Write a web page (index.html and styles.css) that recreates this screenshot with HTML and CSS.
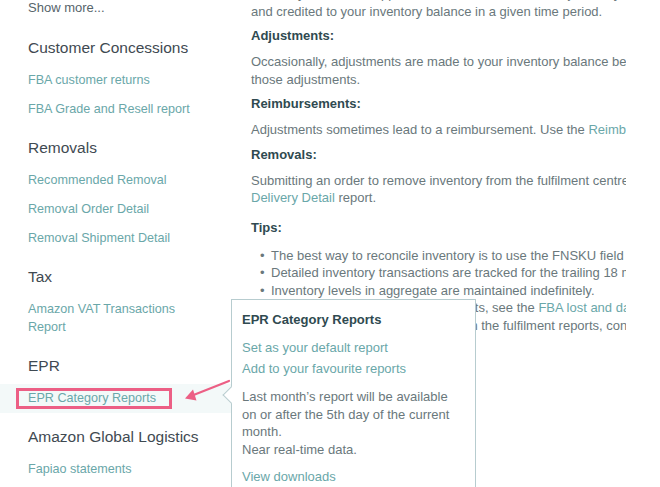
FILE: index.html
```html
<!DOCTYPE html>
<html lang="en">
<head>
  <meta charset="UTF-8" />
  <meta name="viewport" content="width=device-width, initial-scale=1.0"/>
  <title>Inventory reports</title>
  <link rel="stylesheet" href="styles.css">
</head>
<body>
  <div class="page">
    <aside class="sidebar">
      <a class="show-more" href="#">Show more...</a>

      <div class="nav-section">
        <h3>Customer Concessions</h3>
        <a href="#">FBA customer returns</a>
        <a href="#">FBA Grade and Resell report</a>
      </div>

      <div class="nav-section">
        <h3>Removals</h3>
        <a href="#">Recommended Removal</a>
        <a href="#">Removal Order Detail</a>
        <a href="#">Removal Shipment Detail</a>
      </div>

      <div class="nav-section">
        <h3>Tax</h3>
        <a href="#">Amazon VAT Transactions<br>Report</a>
      </div>

      <div class="nav-section">
        <h3>EPR</h3>
        <div class="active-row">
          <a class="active" href="#">EPR Category Reports</a>
        </div>
      </div>

      <div class="nav-section">
        <h3>Amazon Global Logistics</h3>
        <a href="#">Fapiao statements</a>
      </div>
    </aside>

    <main class="content">
      <p>Inventory received, shipped, removed, lost, found or adjusted by type, p</p>
      <p>and credited to your inventory balance in a given time period.</p>

      <h4>Adjustments:</h4>
      <p>Occasionally, adjustments are made to your inventory balance because of</p>
      <p>those adjustments.</p>

      <h4>Reimbursements:</h4>
      <p>Adjustments sometimes lead to a reimbursement. Use the <a href="#">Reimbursements report</a></p>

      <h4>Removals:</h4>
      <p>Submitting an order to remove inventory from the fulfilment centre. See the Removal</p>
      <p><a href="#">Delivery Detail</a> report.</p>

      <h4 class="tips">Tips:</h4>
      <ul>
        <li>The best way to reconcile inventory is to use the FNSKU field in each report.</li>
        <li>Detailed inventory transactions are tracked for the trailing 18 months.</li>
        <li>Inventory levels in aggregate are maintained indefinitely.</li>
        <li>To reconcile all lost or damaged units, see the <a href="#">FBA lost and damaged</a> reimbursements report.</li>
        <li>For any products that are missing in the fulfilment reports, contact Seller Support.</li>
      </ul>
    </main>
  </div>

  <div class="popover">
    <span class="caret"></span>
    <div class="popover-title">EPR Category Reports</div>
    <a href="#">Set as your default report</a>
    <a href="#">Add to your favourite reports</a>
    <p>Last month’s report will be available on or after the 5th day of the current month.<br>Near real-time data.</p>
    <a class="downloads" href="#">View downloads</a>
  </div>

  <svg class="pointer" width="60" height="30" viewBox="0 0 60 30">
    <line x1="53" y1="5" x2="15" y2="20" stroke="#ec5f85" stroke-width="2.2" stroke-linecap="round"/>
    <polygon points="9,22.5 17,13.5 20.5,24.5" fill="#ec5f85"/>
  </svg>
</body>
</html>
```

FILE: styles.css
```css
* { box-sizing: border-box; margin: 0; padding: 0; }

body {
  font-family: 'Liberation Sans', Arial, sans-serif;
  background-color: #fff;
  color: #6a787c;
  width: 660px;
  height: 487px;
  overflow: hidden;
  position: relative;
}

a {
  color: #6aa7a9;
  text-decoration: none;
}

.page {
  display: flex;
}

/* left nav */
.sidebar {
  width: 231px;
  flex-shrink: 0;
  padding: 1px 0 0 28px;
  display: flex;
  flex-direction: column;
  gap: 19px;
}

.show-more {
  color: #56646a;
  font-size: 13px;
  line-height: 14px;
  margin-bottom: 3px;
}

.nav-section h3 {
  font-size: 15.5px;
  font-weight: normal;
  line-height: 22px;
  color: #3f4a52;
  margin-bottom: 12px;
}

.nav-section a {
  display: block;
  font-size: 12.6px;
  line-height: 18px;
}

.nav-section a + a {
  margin-top: 11px;
}

.active-row {
  margin: -5px 0 -6px -28px;
  padding: 4px 0 4px 16px;
  background-color: #f3f9f9;
}

.active-row a.active {
  display: inline-block;
  border: 3px solid #ec5f85;
  padding: 0 13px 0 9px;
  line-height: 15px;
}

/* main text */
.content {
  width: 395px;
  padding-left: 20px;
  margin-top: -15px;
  overflow: hidden;
  font-size: 13px;
}

.content p {
  line-height: 17.5px;
  white-space: nowrap;
}

.content h4 {
  font-size: 13px;
  line-height: 18px;
  font-weight: bold;
  color: #2f4a50;
  margin: 7px 0 8px;
}

.content h4.tips {
  margin: 12px 0 10px;
}

.content ul {
  list-style: none;
  padding-left: 9px;
}

.content li {
  line-height: 17.5px;
  white-space: nowrap;
}

.content li::before {
  content: "\2022";
  display: inline-block;
  width: 11px;
}

/* popover over the content */
.popover {
  position: absolute;
  left: 231px;
  top: 299px;
  width: 245px;
  height: 200px;
  background-color: #fff;
  border: 1px solid #b7cccf;
  padding: 10px 10px 0 10px;
  font-size: 13px;
}

.popover-title {
  font-weight: bold;
  color: #2f4a50;
  line-height: 20px;
  margin-bottom: 9px;
}

.popover a {
  display: block;
  line-height: 18px;
  margin-bottom: 3px;
}

.popover p {
  margin-top: 10px;
  line-height: 17.5px;
}

.popover .downloads {
  margin-top: 10px;
}

.caret {
  position: absolute;
  left: -7px;
  top: 89px;
  width: 12px;
  height: 12px;
  background-color: #fff;
  border-left: 1px solid #b7cccf;
  border-bottom: 1px solid #b7cccf;
  transform: rotate(45deg);
}

.pointer {
  position: absolute;
  left: 176px;
  top: 376px;
}
```
